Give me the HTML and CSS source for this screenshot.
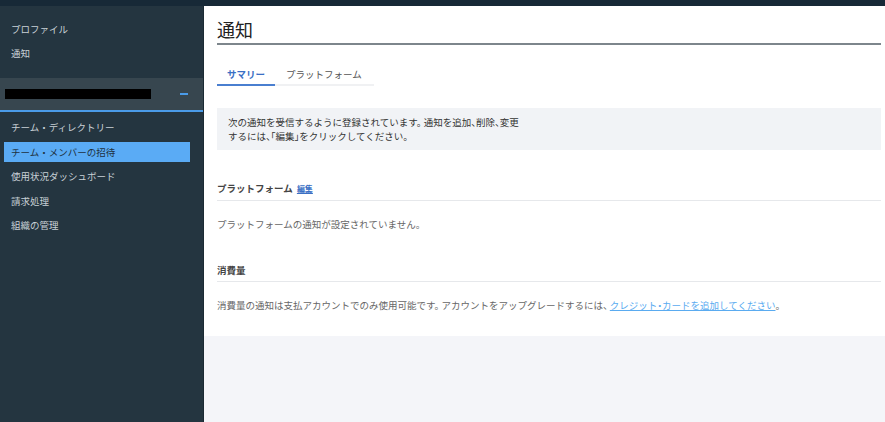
FILE: index.html
```html
<!DOCTYPE html>
<html lang="ja">
<head>
    <meta charset="UTF-8">
    <meta name="viewport" content="width=device-width, initial-scale=1.0">
    <title>通知</title>
    <link rel="stylesheet" href="styles.css">
</head>
<body>
    <div class="topbar"></div>
    <div class="layout">
        <div class="sidebar">
            <ul class="navList">
                <li>プロファイル</li>
                <li>通知</li>
            </ul>
            <div class="orgBand">
                <span class="orgName"></span>
                <span class="collapse"></span>
            </div>
            <ul class="navList orgList">
                <li>チーム・ディレクトリー</li>
                <li class="active">チーム・メンバーの招待</li>
                <li>使用状況ダッシュボード</li>
                <li>請求処理</li>
                <li>組織の管理</li>
            </ul>
        </div>
        <div class="main">
            <div class="panel">
                <h1 class="title">通知</h1>
                <div class="tabs">
                    <span class="tab active">サマリー</span>
                    <span class="tab">プラットフォーム</span>
                </div>
                <div class="infoBox">
                    <p>次の通知を受信するように登録されています。 通知を追加、削除、変更するには、「編集」をクリックしてください。</p>
                </div>
                <h2 class="sectionHead">プラットフォーム <a href="#" class="editLink">編集</a></h2>
                <p class="sectionText">プラットフォームの通知が設定されていません。</p>
                <h2 class="sectionHead">消費量</h2>
                <p class="sectionText">消費量の通知は支払アカウントでのみ使用可能です。 アカウントをアップグレードするには、 <a href="#" class="textLink">クレジット・カードを追加してください</a>。</p>
            </div>
        </div>
    </div>
</body>
</html>
```

FILE: styles.css
```css
* {
    box-sizing: border-box;
}
body {
    margin: 0;
    height: 100vh;
    display: flex;
    flex-direction: column;
    font-family: "Noto Sans CJK JP", "Noto Sans", sans-serif;
    font-size: 9.5px;
    background-color: #f4f5f9;
    overflow: hidden;
}
.topbar {
    height: 6px;
    background-color: #172937;
}
.layout {
    flex: 1;
    display: flex;
}
.sidebar {
    width: 204px;
    background-color: #243540;
    border-right: 1px solid #1b2a33;
}
.navList {
    list-style: none;
    margin: 0;
    padding: 11px 0 0 0;
}
.navList li {
    height: 24px;
    line-height: 24px;
    padding-left: 11px;
    color: #c9d1d7;
}
.orgBand {
    margin-top: 13px;
    height: 34px;
    background-color: #37464f;
    border-bottom: 2px solid #4a9be8;
    display: flex;
    align-items: center;
    padding: 0 15px 0 5px;
}
.orgName {
    width: 146px;
    height: 10px;
    background-color: #000;
}
.collapse {
    margin-left: auto;
    width: 8px;
    height: 2px;
    background-color: #4a9be8;
}
.orgList {
    padding: 5px 13px 0 4px;
    display: flex;
    flex-direction: column;
    gap: 4.5px;
}
.orgList li {
    height: 20px;
    line-height: 20px;
    padding-left: 7px;
}
.orgList li.active {
    background-color: #5aabf5;
    color: #1f3140;
}
.main {
    flex: 1;
}
.panel {
    background-color: #fff;
    height: 330px;
    padding: 11px 4px 0 13px;
}
.title {
    margin: 0;
    font-size: 18px;
    font-weight: normal;
    line-height: 24px;
    color: #222;
    padding-bottom: 2px;
    border-bottom: 2px solid #7d868c;
}
.tabs {
    display: inline-flex;
    margin-top: 13px;
    border-bottom: 2px solid #f0f1f3;
}
.tab {
    padding: 8px 10px 2px 10px;
    line-height: 16px;
    color: #555;
    margin-bottom: -2px;
    border-bottom: 2px solid transparent;
}
.tab.active {
    color: #3a6fc4;
    font-weight: bold;
    border-bottom-color: #4a7fd0;
}
.tab + .tab {
    padding: 8px 12px 2px 11px;
}
.infoBox {
    margin-top: 22px;
    background-color: #f1f3f6;
    padding: 7px 11px;
}
.infoBox p {
    margin: 0;
    max-width: 294px;
    line-height: 14px;
    color: #333;
    font-feature-settings: "halt";
}
.sectionHead {
    margin: 30px 0 0 0;
    font-size: 9.5px;
    line-height: 16px;
    color: #444;
    padding-bottom: 3px;
    border-bottom: 1px solid #e6e8eb;
}
.editLink {
    font-size: 8px;
    color: #3a6fc4;
    margin-left: 2px;
}
.sectionText {
    margin: 15px 0 0 0;
    line-height: 16px;
    color: #666;
    font-feature-settings: "halt";
}
.sectionText + .sectionHead {
    margin-top: 30px;
}
.textLink {
    color: #5aabf0;
}
```
